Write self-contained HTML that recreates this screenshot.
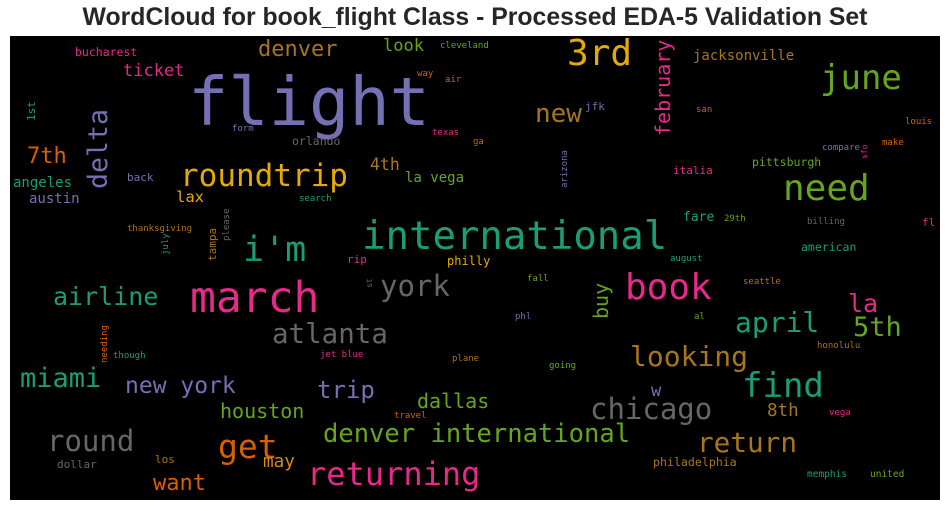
<!DOCTYPE html>
<html><head><meta charset="utf-8"><style>
body{margin:0;width:950px;height:511px;background:#fff;position:relative;overflow:hidden}
h1{position:absolute;left:0;top:5px;width:950px;margin:0;text-align:center;font:bold 24.8px "Liberation Sans",sans-serif;color:#262626;line-height:26px}
#c{position:absolute;left:10px;top:36px;width:930px;height:464px;background:#000}
#w span{position:absolute;font-family:"DejaVu Sans Mono","Liberation Mono",monospace;line-height:1;white-space:nowrap}
#w span.v{transform:rotate(-90deg);transform-origin:0 0}
.p{color:#7570b3}.t{color:#1b9e77}.o{color:#d95f02}.k{color:#e7298a}.g{color:#66a61e}.y{color:#e6ab02}.b{color:#a6761d}.r{color:#666}
</style></head><body>
<h1>WordCloud for book_flight Class - Processed EDA-5 Validation Set</h1>
<div id="c"></div>
<div id="w">
<span class="k" style="left:75px;top:47px;font-size:11.5px">bucharest</span>
<span class="b" style="left:258px;top:39px;font-size:22px">denver</span>
<span class="g" style="left:383px;top:38px;font-size:17px">look</span>
<span class="g" style="left:440px;top:42px;font-size:9px">cleveland</span>
<span class="k" style="left:123px;top:63px;font-size:17px">ticket</span>
<span class="p" style="left:188px;top:69px;font-size:67px">flight</span>
<span class="o" style="left:417px;top:70px;font-size:9px">way</span>
<span class="b" style="left:445px;top:76px;font-size:9px">air</span>
<span class="p" style="left:232px;top:125px;font-size:9px">form</span>
<span class="k" style="left:432px;top:129px;font-size:9px">texas</span>
<span class="o" style="left:27px;top:146px;font-size:22px">7th</span>
<span class="r" style="left:292px;top:136px;font-size:11.5px">orlando</span>
<span class="b" style="left:473px;top:138px;font-size:9px">ga</span>
<span class="y" style="left:180px;top:161px;font-size:31px">roundtrip</span>
<span class="b" style="left:370px;top:157px;font-size:16.5px">4th</span>
<span class="g" style="left:405px;top:171px;font-size:14px">la vega</span>
<span class="p" style="left:127px;top:172px;font-size:11px">back</span>
<span class="t" style="left:13px;top:176px;font-size:14px">angeles</span>
<span class="p" style="left:29px;top:192px;font-size:14px">austin</span>
<span class="y" style="left:176px;top:190px;font-size:15.5px">lax</span>
<span class="t" style="left:299px;top:195px;font-size:9px">search</span>
<span class="b" style="left:127px;top:225px;font-size:9px">thanksgiving</span>
<span class="t" style="left:243px;top:233px;font-size:35px">i'm</span>
<span class="t" style="left:362px;top:217px;font-size:39px">international</span>
<span class="k" style="left:347px;top:254px;font-size:11px">rip</span>
<span class="y" style="left:447px;top:255px;font-size:12px">philly</span>
<span class="y" style="left:567px;top:36px;font-size:36px">3rd</span>
<span class="b" style="left:693px;top:49px;font-size:14px">jacksonville</span>
<span class="g" style="left:820px;top:61px;font-size:34px">june</span>
<span class="b" style="left:535px;top:101px;font-size:26px">new</span>
<span class="p" style="left:585px;top:101px;font-size:11px">jfk</span>
<span class="b" style="left:696px;top:106px;font-size:9px">san</span>
<span class="o" style="left:905px;top:118px;font-size:9px">louis</span>
<span class="p" style="left:822px;top:144px;font-size:9px">compare</span>
<span class="o" style="left:882px;top:139px;font-size:9px">make</span>
<span class="k" style="left:673px;top:165px;font-size:11px">italia</span>
<span class="g" style="left:752px;top:157px;font-size:11.5px">pittsburgh</span>
<span class="g" style="left:783px;top:171px;font-size:36px">need</span>
<span class="t" style="left:683px;top:211px;font-size:13px">fare</span>
<span class="g" style="left:724px;top:215px;font-size:9px">29th</span>
<span class="r" style="left:807px;top:218px;font-size:9px">billing</span>
<span class="k" style="left:922px;top:217px;font-size:11px">fl</span>
<span class="t" style="left:801px;top:242px;font-size:11.5px">american</span>
<span class="t" style="left:670px;top:255px;font-size:9px">august</span>
<span class="k" style="left:190px;top:277px;font-size:43px">march</span>
<span class="r" style="left:380px;top:272px;font-size:29px">york</span>
<span class="t" style="left:53px;top:284px;font-size:25px">airline</span>
<span class="r" style="left:272px;top:321px;font-size:27.5px">atlanta</span>
<span class="t" style="left:113px;top:352px;font-size:9px">though</span>
<span class="k" style="left:320px;top:351px;font-size:9px">jet blue</span>
<span class="b" style="left:452px;top:355px;font-size:9px">plane</span>
<span class="t" style="left:20px;top:365px;font-size:27px">miami</span>
<span class="p" style="left:125px;top:375px;font-size:23px">new york</span>
<span class="p" style="left:317px;top:378px;font-size:24px">trip</span>
<span class="g" style="left:417px;top:391px;font-size:20px">dallas</span>
<span class="g" style="left:220px;top:401px;font-size:20px">houston</span>
<span class="o" style="left:394px;top:412px;font-size:9px">travel</span>
<span class="g" style="left:323px;top:422px;font-size:25.5px">denver international</span>
<span class="r" style="left:47px;top:427px;font-size:29px">round</span>
<span class="o" style="left:218px;top:430px;font-size:33px">get</span>
<span class="b" style="left:155px;top:454px;font-size:11px">los</span>
<span class="r" style="left:57px;top:459px;font-size:11px">dollar</span>
<span class="o" style="left:263px;top:454px;font-size:17.7px;color:#d98a0a">may</span>
<span class="o" style="left:153px;top:473px;font-size:22px">want</span>
<span class="k" style="left:307px;top:458px;font-size:32px">returning</span>
<span class="k" style="left:625px;top:270px;font-size:36px">book</span>
<span class="g" style="left:527px;top:275px;font-size:9px">fall</span>
<span class="b" style="left:743px;top:278px;font-size:9px">seattle</span>
<span class="k" style="left:848px;top:291px;font-size:25px">la</span>
<span class="p" style="left:515px;top:313px;font-size:9px">phl</span>
<span class="g" style="left:694px;top:313px;font-size:9px">al</span>
<span class="t" style="left:735px;top:309px;font-size:28px">april</span>
<span class="g" style="left:853px;top:314px;font-size:27px">5th</span>
<span class="b" style="left:817px;top:342px;font-size:9px">honolulu</span>
<span class="b" style="left:630px;top:343px;font-size:28px">looking</span>
<span class="g" style="left:549px;top:362px;font-size:9px">going</span>
<span class="t" style="left:742px;top:369px;font-size:34px">find</span>
<span class="p" style="left:651px;top:383px;font-size:17px">w</span>
<span class="r" style="left:590px;top:395px;font-size:29px">chicago</span>
<span class="b" style="left:767px;top:403px;font-size:17.5px">8th</span>
<span class="k" style="left:829px;top:409px;font-size:9px">vega</span>
<span class="b" style="left:697px;top:429px;font-size:27.7px">return</span>
<span class="b" style="left:653px;top:457px;font-size:11.6px">philadelphia</span>
<span class="t" style="left:807px;top:470px;font-size:9.5px">memphis</span>
<span class="g" style="left:870px;top:470px;font-size:9.5px">united</span>
<span class="t v" style="left:26px;top:121px;font-size:11px">1st</span>
<span class="p v" style="left:86px;top:189px;font-size:26.6px">delta</span>
<span class="r v" style="left:223px;top:241px;font-size:9px">please</span>
<span class="t v" style="left:162px;top:255px;font-size:9px">july</span>
<span class="b v" style="left:207px;top:261px;font-size:11px">tampa</span>
<span class="k v" style="left:653px;top:136px;font-size:20px">february</span>
<span class="p v" style="left:561px;top:188px;font-size:9px">arizona</span>
<span class="k v" style="left:861px;top:159px;font-size:8px">sfo</span>
<span class="r v" style="left:366px;top:288px;font-size:8px">st</span>
<span class="o v" style="left:101px;top:363px;font-size:9px">needing</span>
<span class="g v" style="left:591px;top:319px;font-size:20px">buy</span>
</div>
</body></html>
